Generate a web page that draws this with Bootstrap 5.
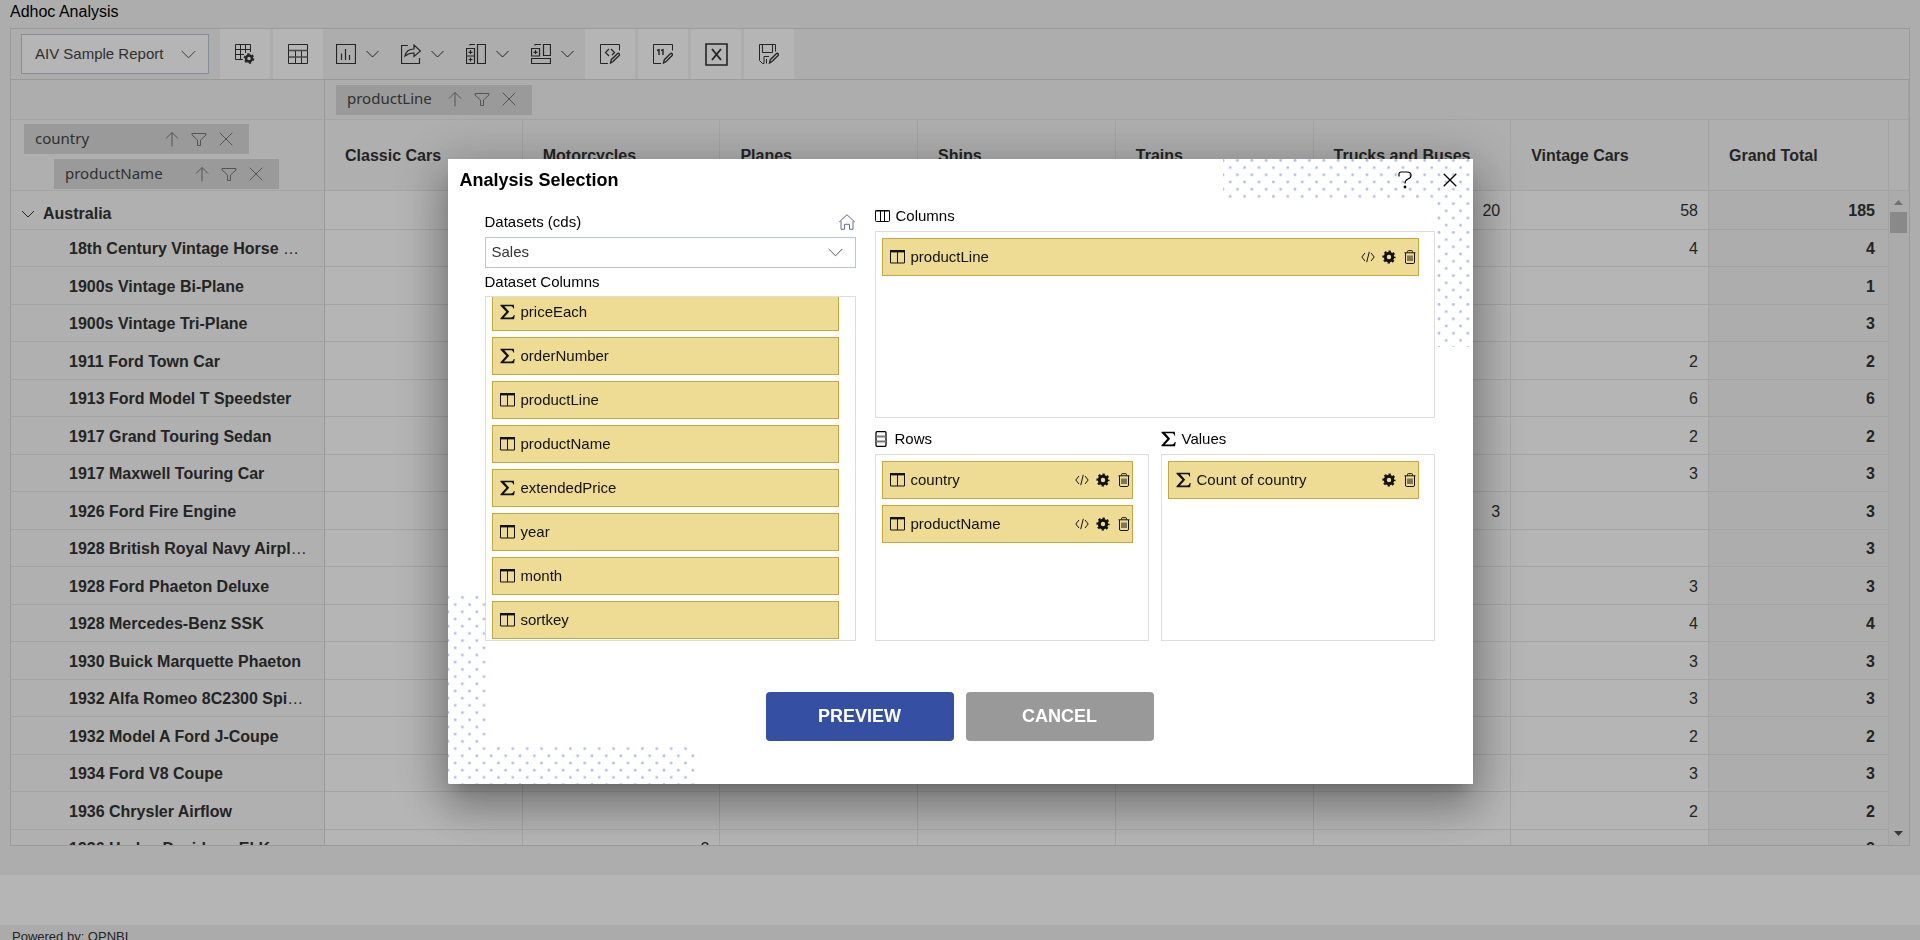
<!DOCTYPE html>
<html lang="en">
<head>
<meta charset="utf-8">
<meta name="viewport" content="width=device-width, initial-scale=1">
<title>Adhoc Analysis</title>
<link rel="stylesheet" href="https://cdn.jsdelivr.net/npm/bootstrap@5.3.0/dist/css/bootstrap.min.css">
<style>
  :root { --edge: #dadada; --line: #e8e8e8; --soft: #f4f4f4; --ink: #333; --gold: #eedc94; --gold-edge: #c2a83e; }
  body { font-family: "Liberation Sans", Arial, sans-serif; font-size: 16px; line-height: 20px; color: var(--ink); background: #fff; height: 100vh; overflow: hidden; }
  svg { display: block; flex: none; }
  .ic { fill: none; stroke: currentColor; }
  .page-area { height: calc(100vh - 65px); background: var(--soft); padding: 2px 10px 29px; }
  .page-title { font-size: 16px; line-height: 20px; color: #000; margin: 0 0 6px; font-weight: 400; }
  .pivot { border: 1px solid var(--edge); min-height: 0; }
  .toolbar { height: 51px; border-bottom: 1px solid var(--edge); }
  .report-pick { width: 188px; height: 40px; margin: 0 11px 0 10px; padding: 0 40px 0 13px; font-size: 15px; color: #444; border: 1px solid #bccadb; border-radius: 0; background-position: right 12px center; background-size: 15px 9px; }
  .form-select { --bs-form-select-bg-img: url("data:image/svg+xml,%3Csvg xmlns='http://www.w3.org/2000/svg' viewBox='0 0 15 9'%3E%3Cpath d='M.7 1l6.8 6.8L14.3 1' fill='none' stroke='%23555'/%3E%3C/svg%3E"); background-color: #fff; }
  .tool { width: 50px; height: 50px; border: 0; border-radius: 0; padding: 0; background: #fff; margin-right: 3px; display: flex; align-items: center; justify-content: center; color: #333; }
  .tool-menu { width: 65px; height: 50px; border: 0; border-radius: 0; padding: 0 0 0 13px; display: flex; align-items: center; gap: 10px; color: #333; }
  .tool-menu + .tool { margin-left: 2px; }
  .grid-table { table-layout: fixed; width: 100%; border-collapse: separate; border-spacing: 0; }
  .grid-table th, .grid-table td { border: 0 solid var(--line); border-width: 0 1px 1px 0; padding: 0; }
  .grid-table .axis-col { width: 314px; }
  .grid-table .total-col { width: 180px; }
  .grid-table .bar-col { width: 20px; }
  .grid-table thead th { background: #f7f7f7; font-weight: 700; padding: 2px 0 0 20px; }
  .grid-table thead .band { background: var(--soft); height: 40px; padding: 0 0 0 11px; }
  .grid-table thead .heads { height: 71px; }
  .grid-table thead .axis { padding: 4px 0 0 13px; vertical-align: top; }
  .grid-table .axis, .grid-table tbody th { border-right-color: var(--edge); }
  .grid-table tbody tr { height: 37px; }
  .grid-table tbody tr:nth-child(odd) { height: 38px; }
  .grid-table tbody tr:first-child { height: 39px; }
  .grid-table tbody th { background: #f8f8f8; padding: 2px 14px 0 58px; font-weight: 400; }
  .grid-table tbody .group-head { padding: 8px 0 0 10px; font-weight: 700; }
  .grid-table tbody td { text-align: right; padding: 2px 10px 0 0; background: #fff; }
  .grid-table tbody td.total { background: var(--soft); font-weight: 700; padding-right: 13px; }
  .field-chip { width: 225px; height: 30px; background: #dadada; padding: 0 16px 1px 11px; font-family: "Noto Sans", sans-serif; font-size: 15px; line-height: 18px; font-weight: 400; color: #444; }
  .field-chip.fit { width: 196px; }
  .field-chip.nested { margin: 5px 0 0 30px; }
  .field-chip span { padding-bottom: 2px; }
  .field-chip button { border: 0; background: none; padding: 0; color: #777; }
  .scroll-rail { top: 162px; right: 0; bottom: 0; width: 20px; background: #f1f1f1; padding: 9px 1px 9px 0; }
  .scroll-rail .thumb { width: 17px; height: 21px; background: #c1c1c1; margin-top: 7px; }
  .foot { margin-top: 50px; background: #f1f1f1; height: 30px; padding: 2px 12px; font-size: 13px; }

  .modal-backdrop { --bs-backdrop-opacity: .29; }
  .analysis { --bs-modal-width: 1025px; --bs-modal-margin: 0px; max-width: 1025px; min-height: 100%; padding-top: 2px; }
  .analysis .modal-content { border: 0; border-radius: 0; color: #000; font-size: 15px; box-shadow: 0 11px 15px -7px rgba(0,0,0,.2), 0 22px 38px 3px rgba(0,0,0,.2), 0 9px 50px 10px rgba(0,0,0,.2); }
  .dots { position: absolute; pointer-events: none; }
  .dots-top { top: 0; right: 0; }
  .dots-bottom { bottom: 0; left: 0; }
  .analysis .modal-header { height: 40px; padding: 2px 16px 0 12px; border: 0; gap: 28px; }
  .analysis .modal-title { font-size: 18px; line-height: 24px; font-weight: 700; }
  .analysis .modal-header button { border: 0; background: none; padding: 0; }
  .analysis .modal-body { padding: 6px 38px 43px 37px; gap: 19px; }
  .source { width: 371px; padding-top: 7px; }
  .caption { line-height: 20px; margin: 0; font-size: 15px; font-weight: 400; }
  .target .caption { display: flex; align-items: center; gap: 6px; margin-bottom: 5px; }
  .data-pick { height: 31px; margin: 5px 0 4px; padding: 0 36px 0 6px; font-size: 15px; color: #333; border: 1px solid #bcc5d6; border-radius: 0; background-position: right 12px center; background-size: 15px 9px; }
  .drop-box { border: 1px solid #ddd; background: #fff; padding: 6px 15px 0 6px; display: flex; flex-direction: column; gap: 6px; margin: 0; list-style: none; height: 187px; }
  .drop-box.tall { height: 345px; justify-content: flex-end; overflow: hidden; padding: 0 16px 1px 6px; margin-top: 4px; }
  .field { height: 38px; flex: none; border: 1px solid var(--gold-edge); background: var(--gold); padding: 1px 1px 0 7px; display: flex; align-items: center; gap: 6px; color: #111; }
  .field .acts { margin-left: auto; display: flex; gap: 7px; }
  .field button { border: 0; background: none; padding: 0; color: #111; }
  .act { width: 188px; height: 49px; border: 0; border-radius: 4px; font-size: 18px; font-weight: 700; color: #fff; }
  .act:hover { color: #fff; }
  .act-go { background: #3550a2; }
  .act-no { background: #999; }
  .target { min-width: 0; padding-top: 1px; }
</style>
</head>
<body>
<svg width="0" height="0" class="position-absolute" aria-hidden="true">
  <symbol id="chev" viewBox="0 0 13 8"><path d="M.5 1l6 6 6-6"/></symbol>
  <symbol id="up" viewBox="0 0 14 16"><path d="M7 15.5V1.5M1 7.5l6-6 6 6"/></symbol>
  <symbol id="funnel" viewBox="0 0 16 14"><path d="M1 1.500h14v1.500L9.500 8v5.500h-3V8L1 3z"/></symbol>
  <symbol id="cross" viewBox="0 0 14 14"><path d="M.7.7l12.600 12.600M13.300.7L.7 13.300"/></symbol>
  <symbol id="sigma" viewBox="0 0 16 16"><path d="M.5.3h14.300l.3 4h-1c-.4-2-1-2.400-3-2.400H4.600l5.200 5.800-5.600 6.100h7.300c2 0 2.700-.8 3.200-2.500h1L15 15.700H.5v-1.100l6.200-6.800-6.200-6.500z" fill="currentColor" stroke="none"/></symbol>
  <symbol id="field" viewBox="0 0 15 14"><path d="M.5 1v12h14V1M7.500 2v11"/><path d="M0 1.200h15" stroke-width="2.400"/></symbol>
  <symbol id="code" viewBox="0 0 14 12"><path d="M4 2L.8 6 4 10M10 2l3.200 4L10 10M8.300.8L5.700 11.200"/></symbol>
  <symbol id="gear" viewBox="0 0 14 14"><circle cx="7" cy="7" r="3.700" stroke-width="3"/><circle cx="7" cy="7" r="5.600" stroke-width="2" stroke-dasharray="2.300 2.098" stroke-dashoffset="1.150"/></symbol>
  <symbol id="bin" viewBox="0 0 14 14"><path d="M1.500 2.800h11M4.500 2.500v-1q0-.8.8-.8h3.400q.8 0 .8.800v1M2.500 3v9q0 1.500 1.300 1.500h6.400q1.300 0 1.300-1.500V3M5 5.500V11M7 5.500V11M9 5.500V11"/></symbol>
  <symbol id="pencil" viewBox="0 0 20 20"><path d="M10.500 19l.8-3.300 6-6q1-.8 1.800 0t0 1.800l-6 6z" stroke-width="1.300"/></symbol>
</svg>

<main class="page-area d-flex flex-column">
  <h1 class="page-title">Adhoc Analysis</h1>
  <section class="pivot flex-grow-1 position-relative overflow-hidden">
    <div class="toolbar d-flex align-items-center">
      <select class="form-select report-pick" aria-label="Report"><option>AIV Sample Report</option></select>
      <button class="btn tool" type="button" aria-label="Field settings"><svg class="ic" width="20" height="20" viewBox="0 0 20 20"><path d="M8 15.500H.5V.5h15V8M.5 5.500h15M.5 10.500H9M5.500.5v15M10.500.5V9"/><circle cx="14" cy="14.500" r="3" stroke-width="2.400"/><circle cx="14" cy="14.500" r="4.500" stroke-width="1.600" stroke-dasharray="2.300 2.412"/></svg></button>
      <button class="btn tool me-0" type="button" aria-label="Grid"><svg class="ic" width="20" height="20" viewBox="0 0 20 20"><path d="M.5.5h19v19H.5zM7.500 7v12.500M13.500 7v12.500"/><path d="M.5 6.500h19M.5 13h19" stroke-width="1.600" stroke="#666"/></svg></button>
      <button class="btn tool-menu" type="button" aria-label="Chart"><svg class="ic" width="20" height="20" viewBox="0 0 20 20"><path d="M.5.5h19v19H.5zM5.500 9.500V16M9.500 5v11M13.500 11v5" stroke-width="1.200"/></svg><svg class="ic" width="13" height="8"><use href="#chev"/></svg></button>
      <button class="btn tool-menu" type="button" aria-label="Export"><svg class="ic" width="20" height="20" viewBox="0 0 20 20"><path d="M7 1.500H.5v18h18V14" stroke-width="1.200"/><path d="M4 12c.8-4.500 4-7 9-7V1l6.500 6-6.500 5.500V9c-4 0-6.500 1-9 3z" stroke-width="1.200"/></svg><svg class="ic" width="13" height="8"><use href="#chev"/></svg></button>
      <button class="btn tool-menu" type="button" aria-label="Sub totals"><svg class="ic" width="20" height="20" viewBox="0 0 20 20"><path d="M11.500.5h8v19h-8zM.5 4.500h8v15h-8zM.5 12h8M4 1.500V.5h5M4.500 6v4M2.500 8.300h4M4.500 13.500v4M2.500 15.500h4" stroke-width="1.200"/></svg><svg class="ic" width="13" height="8"><use href="#chev"/></svg></button>
      <button class="btn tool-menu" type="button" aria-label="Grand totals"><svg class="ic" width="20" height="20" viewBox="0 0 20 20"><path d="M12.500.5h7v11h-7zM.5 4.500h8v7.500h-8zM.5 14.500h19v5H.5zM4 1.500V.5h6M4.500 6v4M2.500 8.300h4" stroke-width="1.200"/></svg><svg class="ic" width="13" height="8"><use href="#chev"/></svg></button>
      <button class="btn tool" type="button" aria-label="Conditional formatting"><svg class="ic" width="20" height="20" viewBox="0 0 20 20"><path d="M8 19.500H.5V.5h19v6"/><path d="M9 5L5.500 8.500 9 12M11 5l3.500 3.500L12 11" stroke-width="1.200"/><use href="#pencil"/></svg></button>
      <button class="btn tool" type="button" aria-label="Number formatting"><svg class="ic" width="20" height="20" viewBox="0 0 20 20"><path d="M8 19.500H.5V.5h19v6"/><path d="M4 6.500l2-.8V11M8 6.500l2-.8V11" stroke-width="1.400"/><use href="#pencil"/></svg></button>
      <button class="btn tool" type="button" aria-label="Excel"><svg class="ic" width="23" height="23" viewBox="0 0 23 23"><path d="M1 1h21v21H1z" stroke-width="1.600"/><path d="M7 6l9 11M16 6L7 17" stroke-width="1.900"/></svg></button>
      <button class="btn tool" type="button" aria-label="Save"><svg class="ic" width="20" height="20" viewBox="0 0 20 20"><path d="M5 19.500H3.500l-3-3V.5h16v7M3.500.5v8h10v-8M5 19.500v-7h5M7.500 15v4.500"/><use href="#pencil"/></svg></button>
    </div>
    <table class="grid-table">
      <colgroup><col class="axis-col"><col><col><col><col><col><col><col><col class="total-col"><col class="bar-col"></colgroup>
      <thead>
        <tr>
          <th class="band axis"></th>
          <th class="band" colspan="9"><div class="field-chip fit d-flex align-items-center"><span class="me-auto">productLine</span><button type="button" aria-label="Sort"><svg class="ic" width="14" height="16"><use href="#up"/></svg></button><button type="button" class="mx-2 px-1" aria-label="Filter"><svg class="ic" width="16" height="14"><use href="#funnel"/></svg></button><button type="button" aria-label="Remove"><svg class="ic" width="14" height="14"><use href="#cross"/></svg></button></div></th>
        </tr>
        <tr class="heads">
          <th class="axis">
            <div class="field-chip d-flex align-items-center"><span class="me-auto">country</span><button type="button" aria-label="Sort"><svg class="ic" width="14" height="16"><use href="#up"/></svg></button><button type="button" class="mx-2 px-1" aria-label="Filter"><svg class="ic" width="16" height="14"><use href="#funnel"/></svg></button><button type="button" aria-label="Remove"><svg class="ic" width="14" height="14"><use href="#cross"/></svg></button></div>
            <div class="field-chip nested d-flex align-items-center"><span class="me-auto">productName</span><button type="button" aria-label="Sort"><svg class="ic" width="14" height="16"><use href="#up"/></svg></button><button type="button" class="mx-2 px-1" aria-label="Filter"><svg class="ic" width="16" height="14"><use href="#funnel"/></svg></button><button type="button" aria-label="Remove"><svg class="ic" width="14" height="14"><use href="#cross"/></svg></button></div>
          </th>
          <th>Classic Cars</th><th>Motorcycles</th><th>Planes</th><th>Ships</th><th>Trains</th><th>Trucks and Buses</th><th>Vintage Cars</th><th>Grand Total</th><th></th>
        </tr>
      </thead>
      <tbody>
        <tr><th class="group-head"><div class="d-flex align-items-center gap-2"><svg class="ic" width="14" height="8"><use href="#chev"/></svg><span>Australia</span></div></th><td></td><td></td><td></td><td></td><td></td><td>20</td><td>58</td><td class="total">185</td><td></td></tr>
        <tr><th><div class="text-truncate"><b>18th Century Vintage Horse Carriage</b></div></th><td></td><td></td><td></td><td></td><td></td><td></td><td>4</td><td class="total">4</td><td></td></tr>
        <tr><th><div class="text-truncate"><b>1900s Vintage Bi-Plane</b></div></th><td></td><td></td><td></td><td></td><td></td><td></td><td></td><td class="total">1</td><td></td></tr>
        <tr><th><div class="text-truncate"><b>1900s Vintage Tri-Plane</b></div></th><td></td><td></td><td></td><td></td><td></td><td></td><td></td><td class="total">3</td><td></td></tr>
        <tr><th><div class="text-truncate"><b>1911 Ford Town Car</b></div></th><td></td><td></td><td></td><td></td><td></td><td></td><td>2</td><td class="total">2</td><td></td></tr>
        <tr><th><div class="text-truncate"><b>1913 Ford Model T Speedster</b></div></th><td></td><td></td><td></td><td></td><td></td><td></td><td>6</td><td class="total">6</td><td></td></tr>
        <tr><th><div class="text-truncate"><b>1917 Grand Touring Sedan</b></div></th><td></td><td></td><td></td><td></td><td></td><td></td><td>2</td><td class="total">2</td><td></td></tr>
        <tr><th><div class="text-truncate"><b>1917 Maxwell Touring Car</b></div></th><td></td><td></td><td></td><td></td><td></td><td></td><td>3</td><td class="total">3</td><td></td></tr>
        <tr><th><div class="text-truncate"><b>1926 Ford Fire Engine</b></div></th><td></td><td></td><td></td><td></td><td></td><td>3</td><td></td><td class="total">3</td><td></td></tr>
        <tr><th><div class="text-truncate"><b>1928 British Royal Navy Airplane</b></div></th><td></td><td></td><td></td><td></td><td></td><td></td><td></td><td class="total">3</td><td></td></tr>
        <tr><th><div class="text-truncate"><b>1928 Ford Phaeton Deluxe</b></div></th><td></td><td></td><td></td><td></td><td></td><td></td><td>3</td><td class="total">3</td><td></td></tr>
        <tr><th><div class="text-truncate"><b>1928 Mercedes-Benz SSK</b></div></th><td></td><td></td><td></td><td></td><td></td><td></td><td>4</td><td class="total">4</td><td></td></tr>
        <tr><th><div class="text-truncate"><b>1930 Buick Marquette Phaeton</b></div></th><td></td><td></td><td></td><td></td><td></td><td></td><td>3</td><td class="total">3</td><td></td></tr>
        <tr><th><div class="text-truncate"><b>1932 Alfa Romeo 8C2300 Spider Sport</b></div></th><td></td><td></td><td></td><td></td><td></td><td></td><td>3</td><td class="total">3</td><td></td></tr>
        <tr><th><div class="text-truncate"><b>1932 Model A Ford J-Coupe</b></div></th><td></td><td></td><td></td><td></td><td></td><td></td><td>2</td><td class="total">2</td><td></td></tr>
        <tr><th><div class="text-truncate"><b>1934 Ford V8 Coupe</b></div></th><td></td><td></td><td></td><td></td><td></td><td></td><td>3</td><td class="total">3</td><td></td></tr>
        <tr><th><div class="text-truncate"><b>1936 Chrysler Airflow</b></div></th><td></td><td></td><td></td><td></td><td></td><td></td><td>2</td><td class="total">2</td><td></td></tr>
        <tr><th><div class="text-truncate"><b>1936 Harley Davidson El K</b></div></th><td></td><td>2</td><td></td><td></td><td></td><td></td><td></td><td class="total">2</td><td></td></tr>
      </tbody>
    </table>
    <div class="scroll-rail position-absolute d-flex flex-column align-items-center" aria-hidden="true">
      <svg width="9" height="5" viewBox="0 0 9 5"><path d="M0 5L4.500 0 9 5z" fill="#a0a0a0"/></svg>
      <div class="thumb mb-auto"></div>
      <svg width="9" height="5" viewBox="0 0 9 5"><path d="M0 0h9L4.500 5z" fill="#505050"/></svg>
    </div>
  </section>
</main>
<footer class="foot">Powered by: OPNBI</footer>

<div class="modal-backdrop show"></div>
<div class="modal d-block" tabindex="-1" role="dialog" aria-labelledby="dlgTitle">
  <div class="modal-dialog modal-dialog-centered analysis">
    <div class="modal-content">
      <svg class="dots dots-top" width="250" height="188" aria-hidden="true">
        <defs><pattern id="dotfill" width="14.400" height="14.400" patternUnits="userSpaceOnUse"><g fill="#b3bde0"><circle cx="0" cy="1.500" r="1.400"/><circle cx="14.400" cy="1.500" r="1.400"/><circle cx="7.200" cy="8.700" r="1.400"/></g></pattern></defs>
        <path d="M0 0h250v188h-37V40H0z" fill="url(#dotfill)"/>
      </svg>
      <svg class="dots dots-bottom" width="250" height="188" aria-hidden="true"><path d="M0 0h38v150h212v38H0z" fill="url(#dotfill)"/></svg>
      <div class="modal-header position-relative">
        <h2 class="modal-title me-auto" id="dlgTitle">Analysis Selection</h2>
        <button type="button" aria-label="Help"><svg class="ic" width="20" height="18" viewBox="0 0 20 18"><path d="M4 5.500V3.200Q4 1 6 1h6q4 0 4 3.400 0 2.300-3 3.600-3 1.200-3 4.500" stroke-width="1.200"/><circle cx="10" cy="16" r="1.400" fill="currentColor" stroke="none"/></svg></button>
        <button type="button" aria-label="Close"><svg class="ic" width="14" height="14" stroke-width="1.300"><use href="#cross"/></svg></button>
      </div>
      <div class="modal-body d-flex flex-wrap position-relative">
        <div class="source">
          <div class="d-flex justify-content-between align-items-center">
            <label class="caption" for="ds">Datasets (cds)</label>
            <svg class="ic" width="18" height="16" viewBox="0 0 17 16"><path d="M.7 8L8.500.8 16.300 8M2.500 7v8.300H6v-5h5v5h3.500V7" stroke="#64708c"/></svg>
          </div>
          <select id="ds" class="form-select data-pick"><option>Sales</option></select>
          <h3 class="caption">Dataset Columns</h3>
          <ul class="drop-box tall">
            <li class="field"><svg class="ic" width="15" height="16"><use href="#sigma"/></svg>priceEach</li>
            <li class="field"><svg class="ic" width="15" height="16"><use href="#sigma"/></svg>orderNumber</li>
            <li class="field"><svg class="ic" width="15" height="14"><use href="#field"/></svg>productLine</li>
            <li class="field"><svg class="ic" width="15" height="14"><use href="#field"/></svg>productName</li>
            <li class="field"><svg class="ic" width="15" height="16"><use href="#sigma"/></svg>extendedPrice</li>
            <li class="field"><svg class="ic" width="15" height="14"><use href="#field"/></svg>year</li>
            <li class="field"><svg class="ic" width="15" height="14"><use href="#field"/></svg>month</li>
            <li class="field"><svg class="ic" width="15" height="14"><use href="#field"/></svg>sortkey</li>
          </ul>
        </div>
        <div class="target flex-grow-1 d-flex flex-column">
          <h3 class="caption"><svg class="ic" width="15" height="12" viewBox="0 0 15 12"><rect x=".5" y=".5" width="14" height="11" rx="1"/><path d="M0 1h15M5.500 1v10M9.500 1v10"/></svg>Columns</h3>
          <ul class="drop-box">
            <li class="field"><svg class="ic" width="15" height="14"><use href="#field"/></svg>productLine<span class="acts"><button type="button" aria-label="Expression"><svg class="ic" width="14" height="14"><use href="#code"/></svg></button><button type="button" aria-label="Settings"><svg class="ic" width="14" height="14"><use href="#gear"/></svg></button><button type="button" aria-label="Delete"><svg class="ic" width="14" height="14"><use href="#bin"/></svg></button></span></li>
          </ul>
          <div class="d-flex mt-auto gap-2">
            <div class="flex-fill w-50 me-1">
              <h3 class="caption"><svg class="ic" width="14" height="16" viewBox="1 0 12 16"><rect x="1" y=".7" width="10" height="14.600" rx="1" stroke-width="1.300"/><path d="M1 5.500h10M1 10.500h10" stroke="#777" stroke-width="1.800"/></svg>Rows</h3>
              <ul class="drop-box">
                <li class="field"><svg class="ic" width="15" height="14"><use href="#field"/></svg>country<span class="acts"><button type="button" aria-label="Expression"><svg class="ic" width="14" height="14"><use href="#code"/></svg></button><button type="button" aria-label="Settings"><svg class="ic" width="14" height="14"><use href="#gear"/></svg></button><button type="button" aria-label="Delete"><svg class="ic" width="14" height="14"><use href="#bin"/></svg></button></span></li>
                <li class="field"><svg class="ic" width="15" height="14"><use href="#field"/></svg>productName<span class="acts"><button type="button" aria-label="Expression"><svg class="ic" width="14" height="14"><use href="#code"/></svg></button><button type="button" aria-label="Settings"><svg class="ic" width="14" height="14"><use href="#gear"/></svg></button><button type="button" aria-label="Delete"><svg class="ic" width="14" height="14"><use href="#bin"/></svg></button></span></li>
              </ul>
            </div>
            <div class="flex-fill w-50">
              <h3 class="caption"><svg class="ic" width="15" height="16"><use href="#sigma"/></svg>Values</h3>
              <ul class="drop-box">
                <li class="field"><svg class="ic" width="15" height="16"><use href="#sigma"/></svg>Count of country<span class="acts"><button type="button" aria-label="Settings"><svg class="ic" width="14" height="14"><use href="#gear"/></svg></button><button type="button" aria-label="Delete"><svg class="ic" width="14" height="14"><use href="#bin"/></svg></button></span></li>
              </ul>
            </div>
          </div>
        </div>
        <div class="w-100 d-flex justify-content-center gap-2 mt-2 pt-4">
          <button type="button" class="btn act act-go me-1">PREVIEW</button>
          <button type="button" class="btn act act-no">CANCEL</button>
        </div>
      </div>
    </div>
  </div>
</div>
<script src="https://cdn.jsdelivr.net/npm/bootstrap@5.3.0/dist/js/bootstrap.bundle.min.js"></script>
</body>
</html>
